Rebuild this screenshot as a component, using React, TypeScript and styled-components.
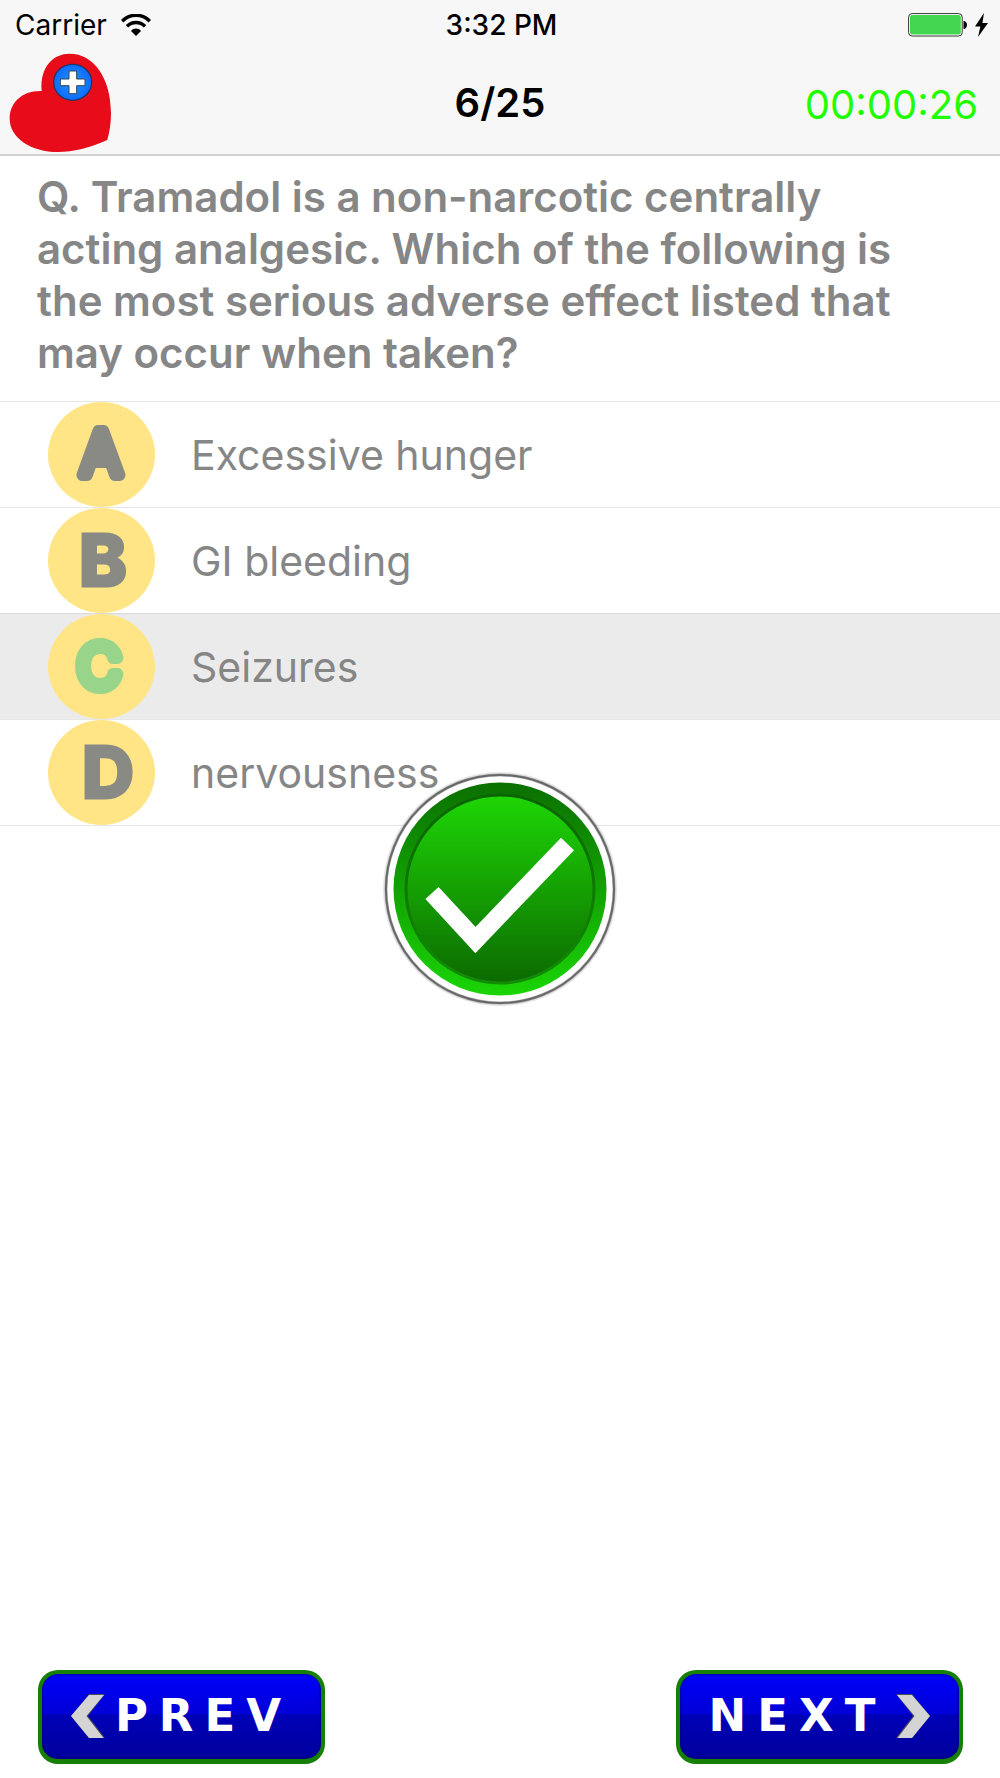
import React, { useState } from "react";
import styled, { createGlobalStyle } from "styled-components";

const GlobalStyle = createGlobalStyle`
  *, *::before, *::after { box-sizing: border-box; }
  body {
    margin: 0;
    background: #ffffff;
    font-family: Inter, "Liberation Sans", sans-serif;
  }
`;

const Page = styled.div`
  position: relative;
  display: flex;
  flex-direction: column;
  min-height: 100vh;
`;

const Header = styled.header`
  background: #f7f7f7;
  border-bottom: 2px solid #d2d2d2;
  color: #000000;
`;

const StatusBar = styled.div`
  display: grid;
  grid-template-columns: 1fr auto 1fr;
  align-items: center;
  height: 50px;
  padding: 0 12px 0 15px;
  font-size: 28px;
  line-height: 32px;
`;

const StatusGroup = styled.div<{ $end?: boolean }>`
  display: flex;
  align-items: center;
  justify-content: ${(p) => (p.$end ? "flex-end" : "flex-start")};
  gap: ${(p) => (p.$end ? "7px" : "14px")};
`;

const Clock = styled.time`
  font-weight: 500;
`;

const NavBar = styled.div`
  display: grid;
  grid-template-columns: 1fr auto 1fr;
  align-items: center;
  height: 104px;
  padding: 2px 9px 0;
`;

const Counter = styled.h1`
  margin: 0;
  font-size: 40px;
  line-height: 48px;
  font-weight: 600;
`;

const Timer = styled.time`
  justify-self: end;
  padding: 4px 13px 0 0;
  color: #1fff00;
  font-size: 40px;
  line-height: 48px;
`;

const Question = styled.h2`
  margin: 0;
  padding: 15px 96px 22px 37px;
  color: #868686;
  font-size: 42px;
  line-height: 52px;
  font-weight: 600;
`;

const Options = styled.ul`
  margin: 0;
  padding: 0;
  list-style: none;
  border-bottom: 1px solid #e6e6e6;
`;

const OptionButton = styled.button<{ $selected: boolean }>`
  display: flex;
  align-items: center;
  gap: 36px;
  width: 100%;
  height: 106px;
  padding: 0 48px;
  border: 0;
  border-top: 1px solid ${(p) => (p.$selected ? "#dadada" : "#e6e6e6")};
  background: ${(p) => (p.$selected ? "#ebebeb" : "#ffffff")};
  color: #868686;
  font-family: inherit;
  font-size: 41px;
  line-height: 52px;
  text-align: left;
`;

const BadgeLetter = styled.text<{ $soft: boolean; $tint: string }>`
  font-family: Inter, "Liberation Sans", sans-serif;
  font-size: ${(p) => (p.$soft ? "60px" : "72px")};
  font-weight: ${(p) => (p.$soft ? 300 : 800)};
  text-anchor: middle;
  fill: ${(p) => p.$tint};
  stroke: ${(p) => p.$tint};
  stroke-width: ${(p) => (p.$soft ? "12px" : "3px")};
  stroke-linejoin: ${(p) => (p.$soft ? "round" : "miter")};
`;

const ResultOverlay = styled.div`
  position: absolute;
  inset: 0;
  display: grid;
  place-items: center;
  pointer-events: none;
`;

const Footer = styled.footer`
  display: flex;
  justify-content: space-between;
  margin-top: auto;
  padding: 0 37px 14px 38px;
`;

const PagerButton = styled.button`
  display: flex;
  align-items: center;
  justify-content: center;
  gap: 10px;
  width: 287px;
  height: 94px;
  padding: 0 0 2px;
  border: 4px solid #158005;
  border-bottom-width: 5px;
  border-radius: 20px;
  background: linear-gradient(#0000fa 0%, #0000d6 47%, #0000b8 48%, #00009c 100%);
  box-shadow: inset 0 0 3px #000060;
  color: #ffffff;
  font-family: "DejaVu Sans", sans-serif;
  font-size: 45px;
  line-height: 52px;
  font-weight: 700;
  letter-spacing: 11px;
`;

const WifiIcon = () => (
  <svg width="30" height="22" viewBox="0 0 30 22" role="img" aria-label="Wi-Fi">
    <g fill="none" stroke="#000">
      <path d="M1.2 7.2C9-.7 21-.7 28.8 7.2" strokeWidth="3.4" />
      <path d="M6 12.2c5.2-5 12.8-5 18 0" strokeWidth="3.4" />
    </g>
    <path d="M10 17c3-3.2 7-3.2 10 0l-5 5z" />
  </svg>
);

const BatteryIcon = () => (
  <svg width="60" height="24" viewBox="0 0 60 24" role="img" aria-label="Battery full">
    <rect x="0.6" y="0.6" width="53.6" height="22.4" rx="3.5" fill="#fff" stroke="#333" />
    <rect x="2" y="2" width="50.8" height="19.6" rx="2" fill="#44d650" />
    <path d="M55.5 8c4.6 0 4.6 8 0 8z" />
  </svg>
);

const BoltIcon = () => (
  <svg width="13" height="24" viewBox="0 0 13 24" role="img" aria-label="Charging">
    <path d="M9 0 0 13.5h5.4L3 24l10-14H7.4z" />
  </svg>
);

const Logo = () => (
  <svg width="103" height="100" viewBox="28 160 309 300" role="img" aria-label="Heart with medical cross">
    <defs>
      <radialGradient id="cross-disc">
        <stop offset="0" stopColor="#2a90ff" />
        <stop offset="1" stopColor="#096dff" />
      </radialGradient>
    </defs>
    <path
      fill="#e80b1a"
      d="M126 274C120 202 160 162 210 162C282 162 334 235 334 340C334 370 330 395 323 421C270 445 220 457 175 457C95 457 30 415 30 357C30 308 68 272 126 274Z"
    />
    <ellipse cx="219" cy="248" rx="57" ry="54" fill="url(#cross-disc)" stroke="#26355c" strokeWidth="4" />
    <path
      d="M208 214h23v24h25v20h-25v24h-23v-24h-26v-20h26z"
      fill="#fff"
      stroke="#345"
      strokeWidth="3"
    />
  </svg>
);

type BadgeProps = { letter: string; x: number; y: number; soft: boolean; tint: string };

const Badge = ({ letter, x, y, soft, tint }: BadgeProps) => (
  <svg width="107" height="105" viewBox="0 0 107 105">
    <ellipse cx="53.5" cy="52.5" rx="53.5" ry="52.5" fill="#ffe585" />
    <BadgeLetter x={x} y={y} $soft={soft} $tint={tint}>
      {letter}
    </BadgeLetter>
  </svg>
);

const CorrectMark = () => (
  <svg width="240" height="240" viewBox="0 0 240 240" role="img" aria-label="Correct answer">
    <defs>
      <linearGradient id="rim" x1="0" y1="0" x2="0" y2="1">
        <stop offset="0" stopColor="#0b7000" />
        <stop offset="1" stopColor="#1ad506" />
      </linearGradient>
      <linearGradient id="face" x1="0" y1="0" x2="0" y2="1">
        <stop offset="0" stopColor="#1ed606" />
        <stop offset="1" stopColor="#0c6a00" />
      </linearGradient>
      <linearGradient id="groove" x1="0" y1="0" x2="0" y2="1">
        <stop offset="0" stopColor="#0a6500" />
        <stop offset="1" stopColor="#128c04" />
      </linearGradient>
    </defs>
    <circle cx="120" cy="120" r="115" fill="none" stroke="#000" strokeOpacity="0.1" strokeWidth="4" />
    <circle cx="120" cy="120" r="114" fill="#fff" stroke="#000" strokeOpacity="0.25" strokeWidth="3" />
    <circle cx="120" cy="120" r="114" fill="none" stroke="#555" strokeOpacity="0.8" strokeWidth="2" />
    <circle cx="120" cy="120" r="106.5" fill="url(#rim)" />
    <circle cx="120" cy="120" r="94" fill="url(#face)" stroke="url(#groove)" strokeWidth="3" />
    <path d="M52 124 95.5 171 187.5 75" fill="none" stroke="#fff" strokeWidth="18" />
  </svg>
);

const Chevron = ({ flip }: { flip?: boolean }) => (
  <svg width="34" height="44" viewBox="0 0 34 44" aria-hidden="true">
    <g transform={flip ? "matrix(-1 0 0 1 34 0)" : undefined}>
      <path d="M18 0h16L17 22l17 22H18L0 22z" fill="#4a4a58" />
      <path d="M18 1h15L15.500 22l17 22H18L0 22z" fill="#d4d4d4" />
    </g>
  </svg>
);

const GRAY = "#8a8a85";
const GREEN = "#98d48a";

const options = [
  { letter: "A", label: "Excessive hunger", x: 53, y: 73, soft: true },
  { letter: "B", label: "GI bleeding", x: 55, y: 78, soft: false },
  { letter: "C", label: "Seizures", x: 51, y: 74, soft: true },
  { letter: "D", label: "nervousness", x: 60, y: 78, soft: false },
];

export default function App() {
  const [selected, setSelected] = useState("C");
  return (
    <>
      <GlobalStyle />
      <Page>
        <Header>
          <StatusBar>
            <StatusGroup>
              <span>Carrier</span>
              <WifiIcon />
            </StatusGroup>
            <Clock>3:32 PM</Clock>
            <StatusGroup $end>
              <BatteryIcon />
              <BoltIcon />
            </StatusGroup>
          </StatusBar>
          <NavBar>
            <Logo />
            <Counter>6/25</Counter>
            <Timer>00:00:26</Timer>
          </NavBar>
        </Header>
        <main>
          <Question>
            Q. Tramadol is a non-narcotic centrally acting analgesic. Which of the following is the most
            serious adverse effect listed that may occur when taken?
          </Question>
          <Options>
            {options.map((o) => (
              <li key={o.letter}>
                <OptionButton
                  type="button"
                  $selected={selected === o.letter}
                  aria-pressed={selected === o.letter}
                  onClick={() => setSelected(o.letter)}
                >
                  <Badge
                    letter={o.letter}
                    x={o.x}
                    y={o.y}
                    soft={o.soft}
                    tint={selected === o.letter ? GREEN : GRAY}
                  />
                  <span>{o.label}</span>
                </OptionButton>
              </li>
            ))}
          </Options>
        </main>
        <Footer>
          <PagerButton type="button">
            <Chevron />
            <span>PREV</span>
          </PagerButton>
          <PagerButton type="button">
            <span>NEXT</span>
            <Chevron flip />
          </PagerButton>
        </Footer>
        <ResultOverlay>
          <CorrectMark />
        </ResultOverlay>
      </Page>
    </>
  );
}
